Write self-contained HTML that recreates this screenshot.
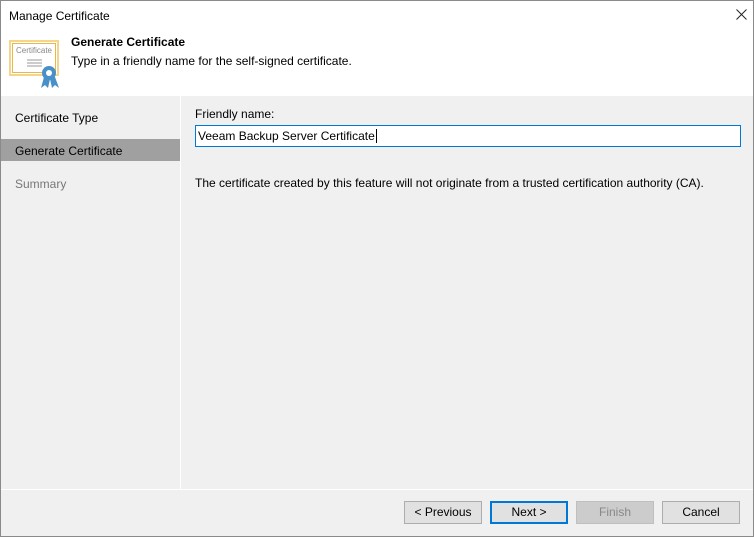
<!DOCTYPE html><html><head><style>
body{margin:0;width:754px;height:537px;overflow:hidden;font-family:"Liberation Sans",sans-serif;font-size:12px;color:#000;background:#f0f0f0}
.win{position:absolute;left:0;top:0;width:752px;height:535px;border:1px solid #8a8a8a;background:#f0f0f0}
.a{position:absolute}
.btn{position:absolute;top:500px;width:76px;height:21px;border:1px solid #adadad;background:#e1e1e1;text-align:center;line-height:21px;font-size:12px}
</style></head><body><div class="win">
<div class="a" style="left:0;top:0;width:752px;height:95px;background:#fff"></div>
<div class="a" style="left:8px;top:8px;font-size:12px">Manage Certificate</div>
<svg class="a" style="left:735px;top:8px" width="11" height="11"><path d="M0.5 0.5L10.5 10.5M10.5 0.5L0.5 10.5" stroke="#222" stroke-width="1"/></svg>
<svg class="a" style="left:7px;top:38px" width="54" height="50" viewBox="0 0 54 50">
<rect x="1" y="1" width="50" height="36" fill="#f5d58a"/><rect x="3" y="3" width="46" height="32" fill="#fff"/><rect x="4.5" y="4.5" width="43" height="29" fill="none" stroke="#e8b94a" stroke-width="1"/>
<text x="26" y="14" font-size="8" text-anchor="middle" fill="#888" font-family="Liberation Sans">Certificate</text>
<line x1="19" y1="21" x2="34" y2="21" stroke="#999"/><line x1="19" y1="24" x2="34" y2="24" stroke="#999"/><line x1="19" y1="27" x2="34" y2="27" stroke="#999"/>
<path d="M36 38 L33 49 L37 46 L40 49 L42 40 L44 49 L47 46 L51 49 L47 38Z" fill="#4a90c8"/>
<circle cx="41" cy="34" r="7" fill="#4a90c8"/><circle cx="41" cy="34" r="3" fill="#fff"/>
</svg>
<div class="a" style="left:70px;top:34px;font-weight:bold;font-size:12px">Generate Certificate</div>
<div class="a" style="left:70px;top:53px">Type in a friendly name for the self-signed certificate.</div>
<div class="a" style="left:179px;top:95px;width:1px;height:393px;background:#fff"></div>
<div class="a" style="left:14px;top:110px">Certificate Type</div>
<div class="a" style="left:0;top:138px;width:179px;height:22px;background:#a0a0a0"></div>
<div class="a" style="left:14px;top:143px">Generate Certificate</div>
<div class="a" style="left:14px;top:176px;color:#777">Summary</div>
<div class="a" style="left:194px;top:106px">Friendly name:</div>
<div class="a" style="left:194px;top:124px;width:544px;height:20px;border:1px solid #0078d7;background:#fff"></div>
<div class="a" style="left:197px;top:128px">Veeam Backup Server Certificate<span style="border-left:1px solid #000;margin-left:1px"></span></div>
<div class="a" style="left:194px;top:175px">The certificate created by this feature will not originate from a trusted certification authority (CA).</div>
<div class="a" style="left:0;top:488px;width:752px;height:1px;background:#fff"></div>
<div class="btn" style="left:403px">&lt; Previous</div>
<div class="btn" style="left:489px;border:2px solid #0078d7;width:74px;height:19px;line-height:19px">Next &gt;</div>
<div class="btn" style="left:575px;background:#ccc;border-color:#bfbfbf;color:#888">Finish</div>
<div class="btn" style="left:661px">Cancel</div>
</div></body></html>
